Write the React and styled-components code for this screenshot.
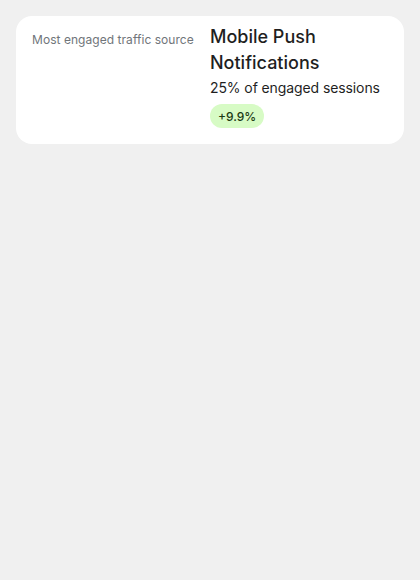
import React from 'react';
import styled, { createGlobalStyle } from 'styled-components';

const GlobalStyle = createGlobalStyle`
  body {
    margin: 0;
    background: #f0f0f0;
    font-family: Inter, Roboto, "Noto Sans", sans-serif;
  }
`;

const Page = styled.div`
  padding: 16px;
`;

const Card = styled.div`
  display: grid;
  grid-template-columns: 1fr 1fr;
  background: #ffffff;
  border-radius: 16px;
  padding: 8px 16px 16px;
`;

const Label = styled.div`
  font-size: 12px;
  line-height: 16px;
  color: #70757a;
  padding-top: 8px;
  letter-spacing: 0.05px;
`;

const Details = styled.div`
  display: flex;
  flex-direction: column;
  align-items: flex-start;
`;

const Title = styled.div`
  font-size: 18px;
  line-height: 26px;
  font-weight: 450;
  color: #1f1f1f;
`;

const Subtitle = styled.div`
  font-size: 14px;
  line-height: 20px;
  color: #1f1f1f;
  margin-top: 2px;
  white-space: nowrap;
  letter-spacing: -0.1px;
`;

const Badge = styled.span`
  margin-top: 6px;
  height: 24px;
  padding: 0 8px;
  border-radius: 12px;
  background: ${p => (p.$up ? '#d7fbc5' : '#fde2e0')};
  color: ${p => (p.$up ? '#1b3a13' : '#5b1410')};
  font-size: 12px;
  font-weight: 500;
  display: inline-flex;
  align-items: center;
`;

export default function App() {
  return (
    <Page>
      <GlobalStyle />
      <Card>
        <Label>Most engaged traffic source</Label>
        <Details>
          <Title>Mobile Push Notifications</Title>
          <Subtitle>25% of engaged sessions</Subtitle>
          <Badge $up>+9.9%</Badge>
        </Details>
      </Card>
    </Page>
  );
}
